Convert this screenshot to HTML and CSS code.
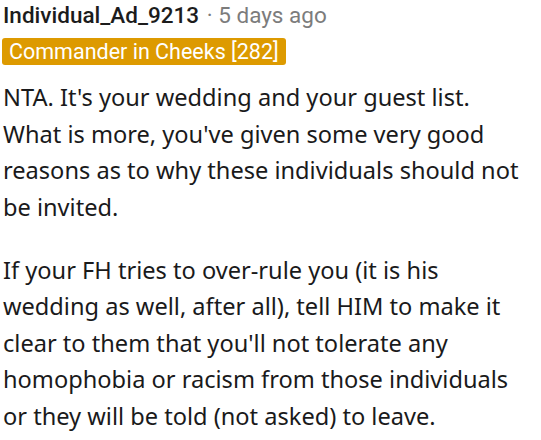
FILE: index.html
```html
<!DOCTYPE html>
<html>
<head>
<meta charset="utf-8">
<link rel="stylesheet" href="styles.css">
</head>
<body>
<div class="comment">
  <div class="meta">
    <span class="author">Individual_Ad_9213</span>
    <span class="time">· 5 days ago</span>
  </div>
  <div class="flair-row"><span class="flair">Commander in Cheeks [282]</span></div>
  <div class="body">
    <p>NTA. It's your wedding and your guest list. What is more, you've given some very good reasons as to why these individuals should not be invited.</p>
    <p>If your FH tries to over-rule you (it is his wedding as well, after all), tell HIM to make it clear to them that you'll not tolerate any homophobia or racism from those individuals or they will be told (not asked) to leave.</p>
  </div>
</div>
</body>
</html>
```
FILE: styles.css
```css
html, body {
  margin: 0;
  padding: 0;
  background: #ffffff;
}
.comment {
  padding: 0 13px 0 3px;
  font-family: "Noto Sans", sans-serif;
  color: #1a1a1b;
}
.meta {
  font-family: "Roboto", "Noto Sans", sans-serif;
  font-size: 22.5px;
  line-height: 30px;
  height: 30px;
}
.author {
  font-weight: 500;
  color: #1c1c1c;
}
.time {
  color: #7c7c7c;
  margin-left: 2px;
}
.flair-row {
  margin-top: 8px;
  height: 27px;
}
.flair {
  display: inline-block;
  background: #dd9a00;
  color: #ffffff;
  font-family: "Roboto", "Noto Sans", sans-serif;
  font-size: 21.5px;
  line-height: 27px;
  padding: 0 7px;
  border-radius: 3px;
  margin-left: -1px;
}
.body {
  margin-top: 14px;
  font-size: 23.6px;
  line-height: 36.5px;
}
.body p {
  margin: 0 0 26.5px 0;
}
```
